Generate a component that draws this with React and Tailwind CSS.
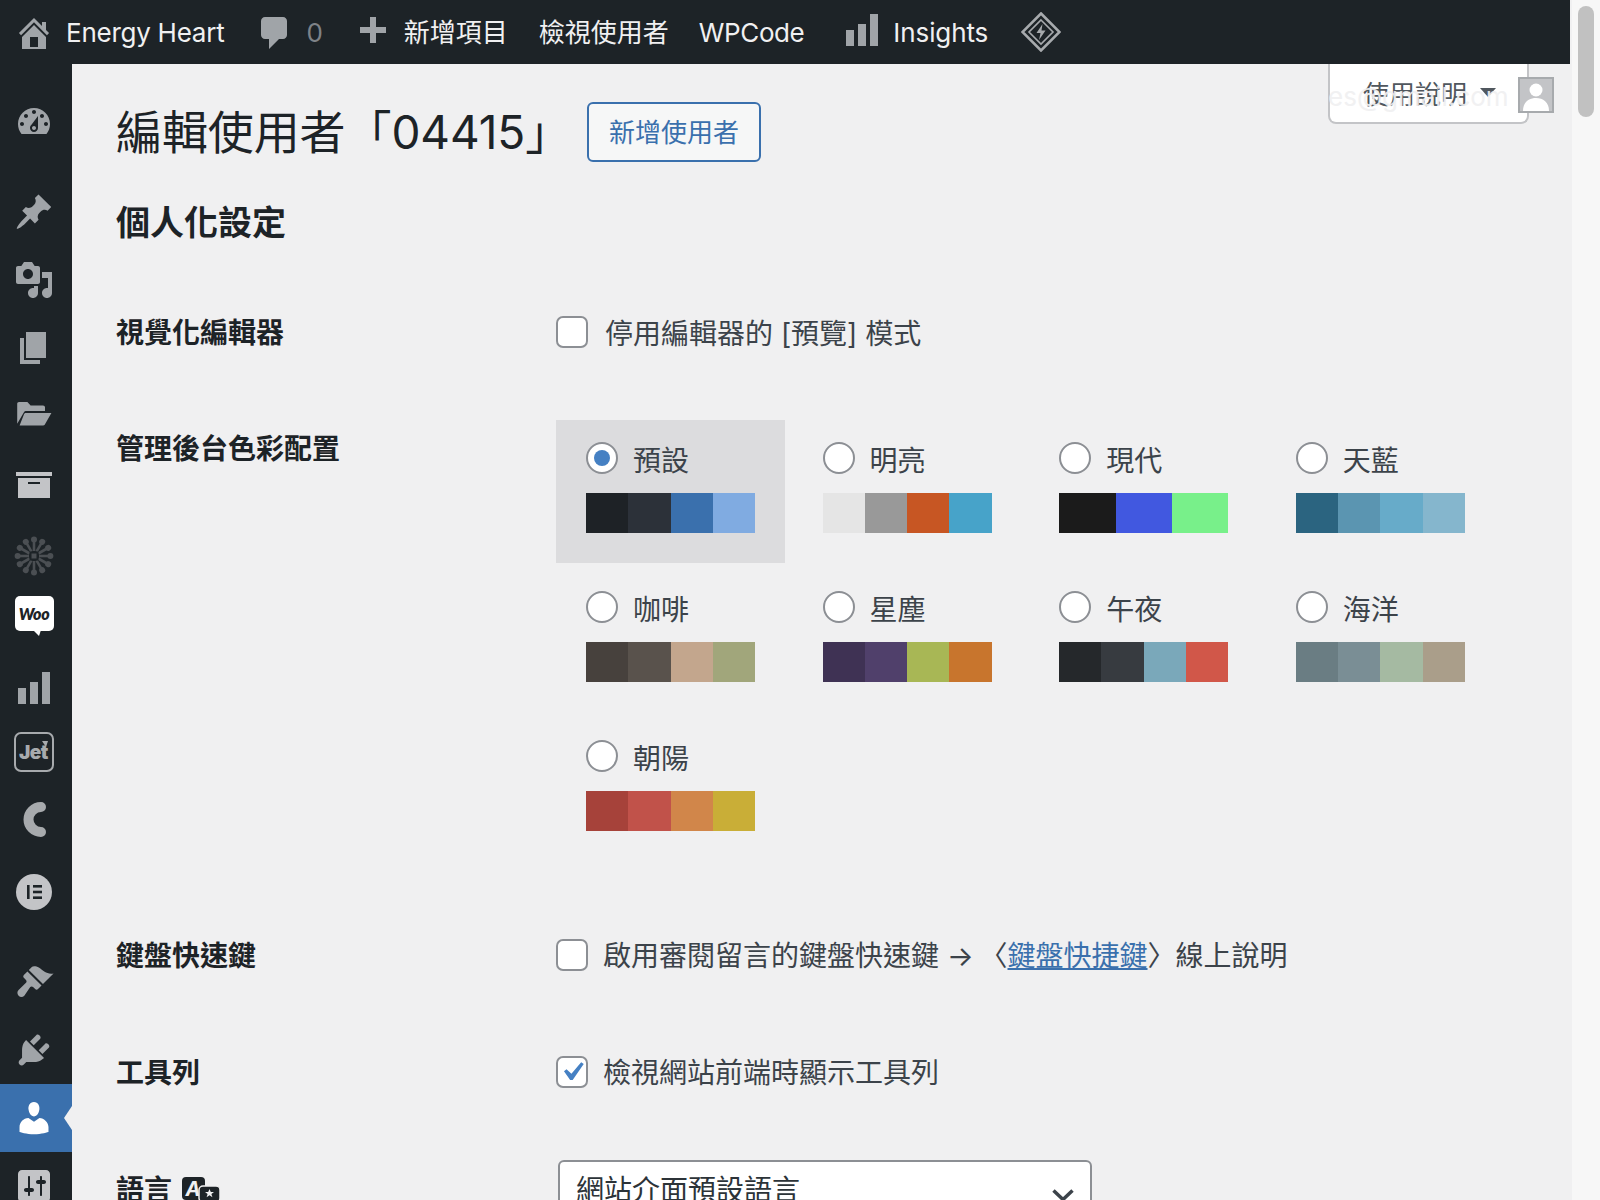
import React from "react";

const P = {
  dash: "M3.76 16h12.48c1.1-1.37 1.76-3.11 1.76-5 0-4.42-3.58-8-8-8s-8 3.58-8 8c0 1.89.66 3.63 1.76 5zM10 4c.55 0 1 .45 1 1s-.45 1-1 1-1-.45-1-1 .45-1 1-1zM6 6c.55 0 1 .45 1 1s-.45 1-1 1-1-.45-1-1 .45-1 1-1zm8 0c.55 0 1 .45 1 1s-.45 1-1 1-1-.45-1-1 .45-1 1-1zm-5.37 5.55L12 7v6c0 1.1-.9 2-2 2s-2-.9-2-2c0-.57.24-1.08.63-1.45zM4 10c.55 0 1 .45 1 1s-.45 1-1 1-1-.45-1-1 .45-1 1-1zm12 0c.55 0 1 .45 1 1s-.45 1-1 1-1-.45-1-1 .45-1 1-1zm-5 3c0-.55-.45-1-1-1s-1 .45-1 1 .45 1 1 1 1-.45 1-1z",
  pin: "M10.44 3.02l1.82-1.82 6.36 6.35-1.83 1.82c-1.05-.68-2.48-.57-3.41.36l-.75.75c-.92.93-1.04 2.35-.35 3.41l-1.83 1.82-2.41-2.41-2.8 2.79c-.42.42-3.38 2.71-3.8 2.29s1.86-3.39 2.28-3.81l2.79-2.79L4.1 9.36l1.83-1.82c1.05.69 2.48.57 3.4-.36l.75-.75c.93-.92 1.05-2.35.36-3.41z",
  media: "M13 11V4c0-.55-.45-1-1-1h-1.67L9 1H5L3.67 3H2c-.55 0-1 .45-1 1v7c0 .55.45 1 1 1h10c.55 0 1-.45 1-1zM7 4.5c1.38 0 2.5 1.12 2.5 2.5S8.38 9.5 7 9.5 4.5 8.38 4.5 7 5.62 4.5 7 4.5zM14 6h5v10.5c0 1.38-1.12 2.5-2.5 2.5S14 17.88 14 16.5s1.12-2.5 2.5-2.5c.17 0 .34.02.5.05V9h-3V6zm-4 8.05V13h2v3.5c0 1.38-1.12 2.5-2.5 2.5S7 17.88 7 16.5 8.12 14 9.5 14c.17 0 .34.02.5.05z",
  page: "M6 15V2h10v13H6zm-1 1h8v2H3V5h2v11z",
  folder: "M2.5 3.5h4.2l1.6 1.7h6.2c.6 0 1 .4 1 1V8H6.2c-.6 0-1 .2-1.3.7L1.6 14.4V4.4c0-.5.4-.9.9-.9zM6 9h12.7l-3.2 5.6c-.3.5-.7.7-1.3.7H2.8L5 9.6c.2-.4.5-.6 1-.6z",
  archive: "M19 4v2H1V4h18zM2 7h16v10H2V7zm11 3V9H7v1h6z",
  bars: "M18 18V2h-4v16h4zm-6 0V7H8v11h4zm-6 0v-8H2v8h4z",
  brush: "M14.48 11.06L7.41 3.99l1.5-1.5c.5-.56 2.3-.47 3.51.32 1.21.8 1.43 1.28 2.91 2.1 1.18.64 2.45 1.26 4.45.85zM13.77 11.77L6.7 4.7 4.93 6.47c-.39.39-.39 1.02 0 1.41l1.06 1.06c.39.39.39 1.03 0 1.42L2.3 14.05c-.8.8-.8 2.05 0 2.85s2.05.8 2.85 0l2.96-4.42c.39-.39 1.03-.39 1.42 0l1.06 1.06c.39.39 1.02.39 1.41 0z",
  plug: "M13.11 4.36L9.87 7.6 8 5.73l3.24-3.24c.35-.34 1.05-.2 1.56.32.52.51.66 1.21.31 1.55zm-8 1.77l.91-1.12 9.01 9.01-1.19.84c-.71.71-2.63 1.16-3.82 1.16H6.14L4.9 17.26c-.59.59-1.54.59-2.12 0-.59-.58-.59-1.53 0-2.12l1.24-1.24v-3.88c0-1.13.4-3.19 1.09-3.89zm7.26 3.97l3.24-3.24c.34-.35 1.04-.21 1.55.31.52.51.66 1.21.31 1.55l-3.24 3.25z",
  user: "M10 9.25c-2.27 0-2.73-3.44-2.73-3.44C7 4.02 7.82 2 9.97 2c2.16 0 2.98 2.02 2.71 3.81 0 0-.41 3.44-2.68 3.44zm0 2.57L12.72 10c2.39 0 4.52 2.33 4.52 4.53v2.49s-3.65 1.13-7.24 1.13c-3.65 0-7.24-1.13-7.24-1.13v-2.49c0-2.25 1.94-4.48 4.47-4.48z",
  settings: "M18 16V4c0-1.1-.9-2-2-2H4c-1.1 0-2 .9-2 2v12c0 1.1.9 2 2 2h12c1.1 0 2-.9 2-2zM8 11h1c.55 0 1 .45 1 1s-.45 1-1 1H8v1.5c0 .28-.22.5-.5.5s-.5-.22-.5-.5V13H6c-.55 0-1-.45-1-1s.45-1 1-1h1V5.5c0-.28.22-.5.5-.5s.5.22.5.5V11zm5-2h-1c-.55 0-1-.45-1-1s.45-1 1-1h1V5.5c0-.28.22-.5.5-.5s.5.22.5.5V7h1c.55 0 1 .45 1 1s-.45 1-1 1h-1v5.5c0 .28-.22.5-.5.5s-.5-.22-.5-.5V9z",
  home: "M16 8.5l1.53 1.53-1.06 1.06L10 4.62l-6.47 6.47-1.06-1.06L10 2.5l4 4v-2h2v4zm-6-2.46l6 5.99V18H4v-5.97zM12 17v-5H8v5h4z",
  comment: "M5 2h9c1.1 0 2 .9 2 2v7c0 1.1-.9 2-2 2h-2l-5 5v-5H5c-1.1 0-2-.9-2-2V4c0-1.1.9-2 2-2z",
  plus: "M17 7v3h-5v5H9v-5H4V7h5V2h3v5h5z",
};

function Dash({ d, className = "" }) {
  return (
    <svg viewBox="0 0 20 20" className={"w-10 h-10 shrink-0 fill-current " + className}>
      <path d={d} />
    </svg>
  );
}

function Spokes() {
  const arms = Array.from({ length: 12 }, (_, i) => (i * 360) / 12);
  return (
    <svg viewBox="0 0 40 40" className="w-10 h-10 mt-2 text-[#4b4f53]">
      <g fill="currentColor" stroke="currentColor">
        {arms.map((a) => (
          <g key={a} transform={`rotate(${a} 20 20)`}>
            <line x1="20" y1="15" x2="20" y2="4" strokeWidth="2.6" />
            <circle cx="20" cy="3.6" r="3" strokeWidth="0" />
          </g>
        ))}
      </g>
      <rect x="15.5" y="15.5" width="9" height="9" fill="#1d2327" />
      <rect x="17.5" y="17.5" width="5" height="5" fill="#4b4f53" />
    </svg>
  );
}

function Woo() {
  return (
    <div className="relative w-[39px] h-[35px] -mt-[13px] bg-white rounded-[5px] flex items-center justify-center">
      <span className="text-[#1d2327] text-[16px] font-extrabold italic leading-none tracking-[-0.3px] font-[family-name:Lato,sans-serif]">Woo</span>
      <svg viewBox="0 0 8 6" className="absolute left-[18px] top-[34px] w-2 h-[6px] fill-white">
        <path d="M0 0h8L6 6z" />
      </svg>
    </div>
  );
}

function Jet() {
  return (
    <div className="relative -mt-2 w-10 h-10 border-2 border-[#a7aaad] rounded-[7px] flex items-center justify-center">
      <span className="text-[#a7aaad] text-[19px] font-black leading-none tracking-[-0.5px] -ml-[1px]">Jet</span>
      <svg viewBox="0 0 6 6" className="absolute right-[4px] top-[7px] w-[6px] h-[6px] fill-[#a7aaad]">
        <path d="M0 0h6L4 6z" />
      </svg>
    </div>
  );
}

function Crescent() {
  return (
    <svg viewBox="0 0 40 40" className="w-10 h-10 -mt-2 text-[#a7aaad]">
      <path d="M27 7A12.5 12.5 0 0 0 27 32" fill="none" stroke="currentColor" strokeWidth="10" strokeLinecap="round" />
    </svg>
  );
}

function Elementor() {
  return (
    <svg viewBox="0 0 40 40" className="w-10 h-10">
      <circle cx="20" cy="20" r="18" fill="#c3c4c7" />
      <g fill="#1d2327">
        <rect x="13" y="13" width="2.6" height="14" />
        <rect x="19" y="13" width="9" height="2.6" />
        <rect x="19" y="18.7" width="9" height="2.6" />
        <rect x="19" y="24.4" width="9" height="2.6" />
      </g>
    </svg>
  );
}

function Diamond() {
  return (
    <svg viewBox="0 0 40 40" className="w-10 h-10 ml-[33px] -mt-[2px] text-[#a7aaad]" fill="none" stroke="currentColor">
      <path d="M20 1.5L38.5 20 20 38.5 1.5 20z" strokeWidth="2.6" />
      <path d="M20 8L32 20 20 32 8 20z" strokeWidth="1.6" />
      <path d="M21.5 12L15.5 21h4l-1.5 7 6.5-9.5h-4z" fill="currentColor" stroke="none" />
    </svg>
  );
}

const Item = ({ children, active }) => (
  <div className={"relative h-[68px] flex items-center justify-center pr-1 " + (active ? "bg-[#3a70ad]" : "")}>
    {children}
    {active && (
      <svg viewBox="0 0 8 24" className="absolute right-0 top-[22px] w-2 h-6 fill-[#f0f0f1]">
        <path d="M8 0v24L0 12z" />
      </svg>
    )}
  </div>
);

function Sidebar() {
  return (
    <aside className="w-[72px] shrink-0 h-[1136px] bg-[#1d2327] pt-[22px] text-[#a0a4a8] overflow-hidden">
      <Item><Dash d={P.dash} className="mt-1" /></Item>
      <div className="h-6" />
      <Item><Dash d={P.pin} /></Item>
      <Item><Dash d={P.media} /></Item>
      <Item><Dash d={P.page} /></Item>
      <Item><Dash d={P.folder} className="-mt-[2px]" /></Item>
      <Item><Dash d={P.archive} className="text-[#c3c4c7]" /></Item>
      <Item><Spokes /></Item>
      <Item><Woo /></Item>
      <Item><Dash d={P.bars} /></Item>
      <Item><Jet /></Item>
      <Item><Crescent /></Item>
      <Item><Elementor /></Item>
      <div className="h-[22px]" />
      <Item><Dash d={P.brush} /></Item>
      <Item><Dash d={P.plug} /></Item>
      <Item active><Dash d={P.user} className="text-white" /></Item>
      <Item><Dash d={P.settings} className="text-[#c3c4c7]" /></Item>
    </aside>
  );
}

function TopBar() {
  return (
    <header className="h-16 pt-[2px] bg-[#1d2327] flex items-center text-[#f0f0f1] text-[26px] leading-none">
      <Dash d={P.home} className="ml-[14px] text-[#a0a4a8]" />
      <span className="ml-3 tracking-[-0.25px]">Energy Heart</span>
      <Dash d={P.comment} className="ml-[31px] text-[#a0a4a8]" />
      <span className="ml-[11px] text-[#7e8287]">0</span>
      <Dash d={P.plus} className="ml-[29px] text-[#a0a4a8]" />
      <span className="ml-[12px]">新增項目</span>
      <span className="ml-[31px]">檢視使用者</span>
      <span className="ml-[30px] tracking-[-0.4px]">WPCode</span>
      <Dash d={P.bars} className="ml-[38px] -mt-[6px] text-[#a0a4a8]" />
      <span className="ml-[11px] tracking-[-0.1px]">Insights</span>
      <Diamond />
    </header>
  );
}

const schemes = [
  ["預設", ["#1e2226", "#2c3139", "#3a70ad", "#80abe1"], true],
  ["明亮", ["#e5e5e5", "#999999", "#c75623", "#47a3c9"]],
  ["現代", ["#1b1b1b", "#4158e0", "#78f08a"]],
  ["天藍", ["#2b6480", "#5b95b1", "#67abc9", "#85b6cd"]],
  ["咖啡", ["#47413d", "#59524c", "#c3a68d", "#a1a67b"]],
  ["星塵", ["#3f3254", "#50406b", "#a8b755", "#c8752d"]],
  ["午夜", ["#25282b", "#373b40", "#7aa8ba", "#d15749"]],
  ["海洋", ["#6a7d83", "#7a8e95", "#a5baa2", "#aa9e8a"]],
  ["朝陽", ["#a6423a", "#c1524a", "#d1864a", "#c9ae37"]],
];

function Scheme({ name, colors, on }) {
  return (
    <div className={"w-[229px] h-[143px] pl-[30px] pt-[22px] " + (on ? "bg-[#dcdcde]" : "")}>
      <div className="flex items-center h-8">
        <span className="w-8 h-8 rounded-full bg-white border-2 border-[#8c8f94] flex items-center justify-center">
          {on && <span className="w-4 h-4 rounded-full bg-[#4580c3]" />}
        </span>
        <span className="ml-[15px] mt-[5px] text-[28px] leading-8 text-[#3c434a]">{name}</span>
      </div>
      <div className="flex w-[169px] h-10 mt-[19px]">
        {colors.map((c) => (
          <span key={c} className="flex-1" style={{ backgroundColor: c }} />
        ))}
      </div>
    </div>
  );
}

function Check({ checked }) {
  return (
    <span className="w-8 h-8 shrink-0 rounded-[7px] bg-white border-2 border-[#8c8f94] flex items-center justify-center">
      {checked && (
        <svg viewBox="0 0 20 20" className="w-[38px] h-[38px] shrink-0 fill-[#4580c3]">
          <path d="M14.83 4.89l1.34.94-5.81 8.38H9.02L5.78 9.67l1.34-1.12 2.57 2.4z" />
        </svg>
      )}
    </span>
  );
}

const Row = ({ label, children, className = "" }) => (
  <section className={"flex items-center h-8 " + className}>
    <h3 className="w-[440px] shrink-0 mt-[2px] text-[28px] leading-8 font-semibold text-[#1d2327]">{label}</h3>
    {children}
  </section>
);

function LangIcon() {
  return (
    <svg viewBox="0 0 38 24" className="w-[38px] h-6 ml-[10px] mt-[3px]">
      <rect x="0" y="0" width="23" height="23" rx="4" fill="#1d2327" />
      <text x="11" y="19" fontSize="20" fontWeight="700" fontStyle="italic" textAnchor="middle" fill="#f0f0f1">A</text>
      <rect x="17" y="9" width="21" height="16" rx="4" fill="#1d2327" stroke="#f0f0f1" strokeWidth="1.5" />
      <path d="M27.5 12l1.3 3h3.2l-2.6 2 1 3.2-2.9-1.9-2.9 1.9 1-3.2-2.6-2h3.2z" fill="#f0f0f1" />
    </svg>
  );
}

function Content() {
  return (
    <main className="flex-1 h-[1136px] pl-[44px] pt-[38px] bg-[#f0f0f1] overflow-hidden">
      <div className="flex items-center h-[60px]">
        <h1 className="text-[46px] leading-[60px] font-normal text-[#1d2327] tracking-[-0.1px]">編輯使用者「04415」</h1>
        <button className="ml-[16px] h-[60px] w-[174px] rounded-[6px] border-2 border-[#3a70ad] bg-[#f6f7f7] text-[26px] text-[#3a70ad]">新增使用者</button>
      </div>
      <h2 className="mt-[41px] text-[34px] leading-10 font-semibold text-[#1d2327]">個人化設定</h2>
      <Row label="視覺化編輯器" className="mt-[73px]">
        <Check />
        <span className="ml-[17px] mt-[3px] text-[28px] leading-8 text-[#3c434a]">停用編輯器的 [預覽] 模式</span>
      </Row>
      <section className="flex mt-[72px]">
        <h3 className="w-[440px] shrink-0 text-[28px] leading-8 pt-[13px] font-semibold text-[#1d2327]">管理後台色彩配置</h3>
        <div className="grid grid-cols-[repeat(4,236.6px)] gap-y-[6px]">
          {schemes.map(([n, c, on]) => (
            <Scheme key={n} name={n} colors={c} on={on} />
          ))}
        </div>
      </section>
      <Row label="鍵盤快速鍵" className="mt-[78px]">
        <Check />
        <span className="ml-[15px] mt-[1px] text-[28px] leading-8 text-[#3c434a]">
          啟用審閱留言的鍵盤快速鍵 <span className="-mr-[2px]">→</span> 〈<a className="text-[#3a70ad] underline">鍵盤快捷鍵</a>〉線上說明
        </span>
      </Row>
      <Row label="工具列" className="mt-[85px]">
        <Check checked />
        <span className="ml-[15px] mt-[1px] text-[28px] leading-8 text-[#3c434a]">檢視網站前端時顯示工具列</span>
      </Row>
      <section className="flex mt-[72px]">
        <div className="w-[442px] shrink-0 flex items-start pt-[14px]">
          <h3 className="text-[28px] leading-8 font-semibold text-[#1d2327]">語言</h3>
          <LangIcon />
        </div>
        <div className="w-[534px] h-[60px] shrink-0 rounded-[6px] border-2 border-[#8c8f94] bg-white flex items-center justify-between pl-[16px] pr-[16px]">
          <span className="text-[28px] leading-8 text-[#2c3338]">網站介面預設語言</span>
          <svg viewBox="0 0 22 13" className="w-[22px] h-[13px] mt-[10px] fill-none stroke-[#3c434a] stroke-[3.5]">
            <path d="M1.5 1.5L11 10.5 20.5 1.5" />
          </svg>
        </div>
      </section>
    </main>
  );
}

function ScreenMeta() {
  return (
    <>
      <div className="absolute left-[1328px] top-[64px] w-[201px] h-[60px] pt-[2px] bg-white border-2 border-t-0 border-[#c3c4c7] rounded-b-[8px] flex items-center pl-[33px] text-[26px] text-[#50575e]">
        <span>使用說明</span>
        <svg viewBox="0 0 16 9" className="ml-[13px] -mt-1 w-4 h-[9px] fill-[#50575e]">
          <path d="M0 0h16L8 9z" />
        </svg>
      </div>
      <span className="absolute left-[1328px] top-[77px] text-[26px] leading-10 text-[#f0f0f1] opacity-90">es@gmail.com</span>
      <div className="absolute left-[1518px] top-[77px] w-9 h-9 bg-[#c3c4c7] border-2 border-[#a7aaad] overflow-hidden">
        <svg viewBox="0 0 32 32" className="w-full h-full fill-white">
          <circle cx="16" cy="11" r="6.5" />
          <path d="M3 32c0-9 6-13 13-13s13 4 13 13z" />
        </svg>
      </div>
    </>
  );
}

export default function App() {
  return (
    <div className="relative w-[1600px] h-[1200px] flex overflow-hidden bg-[#f0f0f1] font-[family-name:Inter,'Noto_Sans_CJK_TC',sans-serif]">
      <div className="w-[1570px] shrink-0">
        <TopBar />
        <div className="flex">
          <Sidebar />
          <Content />
        </div>
      </div>
      <div className="flex-1 bg-[#f7f7f7] border-l-2 border-[#f0f0f1] pl-[6px] pt-[6px]">
        <div className="w-4 h-[111px] rounded-lg bg-[#c1c1c1]" />
      </div>
      <ScreenMeta />
    </div>
  );
}
